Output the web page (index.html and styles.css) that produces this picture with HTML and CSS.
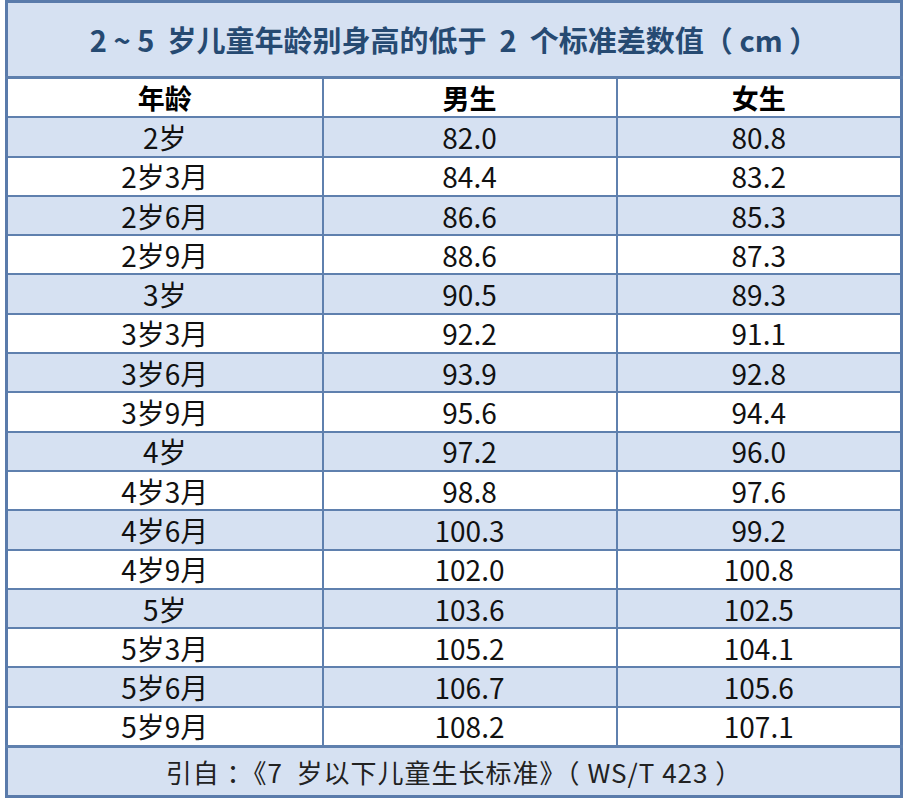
FILE: index.html
```html
<!DOCTYPE html>
<html lang="zh">
<head>
<meta charset="utf-8">
<link rel="stylesheet" href="styles.css">
</head>
<body>
<table class="tbl">
  <colgroup><col class="c1"><col class="c2"><col class="c3"></colgroup>
  <tr class="title"><td colspan="3">2 ~ 5&nbsp; 岁儿童年龄别身高的低于&nbsp; 2&nbsp; 个标准差数值（ cm ）</td></tr>
  <tr class="head"><td>年龄</td><td>男生</td><td>女生</td></tr>
  <tr class="b"><td>2岁</td><td>82.0</td><td>80.8</td></tr>
  <tr class="w"><td>2岁3月</td><td>84.4</td><td>83.2</td></tr>
  <tr class="b"><td>2岁6月</td><td>86.6</td><td>85.3</td></tr>
  <tr class="w"><td>2岁9月</td><td>88.6</td><td>87.3</td></tr>
  <tr class="b"><td>3岁</td><td>90.5</td><td>89.3</td></tr>
  <tr class="w"><td>3岁3月</td><td>92.2</td><td>91.1</td></tr>
  <tr class="b"><td>3岁6月</td><td>93.9</td><td>92.8</td></tr>
  <tr class="w"><td>3岁9月</td><td>95.6</td><td>94.4</td></tr>
  <tr class="b"><td>4岁</td><td>97.2</td><td>96.0</td></tr>
  <tr class="w"><td>4岁3月</td><td>98.8</td><td>97.6</td></tr>
  <tr class="b"><td>4岁6月</td><td>100.3</td><td>99.2</td></tr>
  <tr class="w"><td>4岁9月</td><td>102.0</td><td>100.8</td></tr>
  <tr class="b"><td>5岁</td><td>103.6</td><td>102.5</td></tr>
  <tr class="w"><td>5岁3月</td><td>105.2</td><td>104.1</td></tr>
  <tr class="b"><td>5岁6月</td><td>106.7</td><td>105.6</td></tr>
  <tr class="w"><td>5岁9月</td><td>108.2</td><td>107.1</td></tr>
  <tr class="foot"><td colspan="3">引自 ：《7&nbsp; 岁以下儿童生长标准》（ WS/T 423 ）</td></tr>
</table>
</body>
</html>
```

FILE: styles.css
```css
html, body {
  margin: 0;
  padding: 0;
  background: #ffffff;
}
body {
  padding: 0 0 0 5px;
  font-family: "Noto Sans CJK SC", "Noto Sans", sans-serif;
  color: #111111;
}
.tbl {
  border-collapse: collapse;
  width: 895px;
  table-layout: fixed;
  border: 3px solid #5a7bab;
}
.c1 { width: 316px; }
.c2 { width: 294px; }
.c3 { width: 285px; }
.tbl td {
  border: 2px solid #5f80ae;
  text-align: center;
  padding: 0;
  height: 37.3px;
  font-size: 28px;
  line-height: 36px;
}
.title td {
  height: 70px;
  background: #d6e1f2;
  color: #264a72;
  font-weight: 700;
  font-size: 29px;
  line-height: 40px;
  padding-top: 1px;
  padding-bottom: 2px;
  border-bottom-width: 3px;
}
.head td {
  background: #ffffff;
  font-weight: 700;
  font-size: 27px;
  color: #000000;
}
.b td { background: #d6e1f2; }
.w td { background: #ffffff; }
.foot td {
  height: 47px;
  background: #d6e1f2;
  font-size: 26px;
  letter-spacing: 1px;
  color: #222222;
  border-top-width: 3px;
}
```
